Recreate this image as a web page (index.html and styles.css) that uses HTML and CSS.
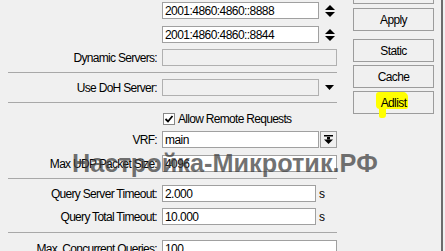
FILE: index.html
```html
<!DOCTYPE html>
<html lang="ru">
<head>
    <meta charset="UTF-8">
    <meta name="viewport" content="width=device-width, initial-scale=1.0">
    <title>DNS Settings</title>
    <link rel="stylesheet" href="styles.css">
</head>
<body>
    <div class="window">
        <div class="form">
            <div class="row row-first">
                <span class="label"></span>
                <input class="field field-short" type="text" value="2001:4860:4860::8888" readonly>
                <svg class="spin" width="10" height="12" viewBox="0 0 10 12"><polygon points="0,5 5,0 10,5"/><polygon points="0,7 10,7 5,12"/></svg>
            </div>
            <div class="row row-gap7">
                <span class="label"></span>
                <input class="field field-short" type="text" value="2001:4860:4860::8844" readonly>
                <svg class="spin" width="10" height="12" viewBox="0 0 10 12"><polygon points="0,5 5,0 10,5"/><polygon points="0,7 10,7 5,12"/></svg>
            </div>
            <div class="row row-gap6">
                <span class="label">Dynamic Servers:</span>
                <input class="field field-full disabled" type="text" readonly>
            </div>
            <div class="sep"></div>
            <div class="row">
                <span class="label">Use DoH Server:</span>
                <input class="field field-short disabled" type="text" readonly>
                <svg class="drop" width="9" height="5" viewBox="0 0 9 5"><polygon points="0,0 9,0 4.5,5"/></svg>
            </div>
            <div class="sep"></div>
            <div class="row row-check">
                <span class="label"></span>
                <span class="checkbox">
                    <svg width="10" height="10" viewBox="0 0 10 10"><path d="M1.5 5 L4 7.5 L8.5 2" fill="none" stroke="#000" stroke-width="1.8"/></svg>
                </span>
                <span class="check-text">Allow Remote Requests</span>
            </div>
            <div class="row row-gap5">
                <span class="label">VRF:</span>
                <input class="field field-short" type="text" value="main" readonly>
                <span class="pick">
                    <svg width="9" height="9" viewBox="0 0 9 9"><rect x="0" y="0" width="9" height="1.5"/><rect x="3" y="2" width="3" height="2.5"/><polygon points="0,4.5 9,4.5 4.5,9"/></svg>
                </span>
            </div>
            <div class="row row-gap7">
                <span class="label">Max UDP Packet Size:</span>
                <input class="field field-full" type="text" value="4096" readonly>
            </div>
            <div class="sep"></div>
            <div class="row">
                <span class="label">Query Server Timeout:</span>
                <input class="field field-time" type="text" value="2.000" readonly>
                <span class="unit">s</span>
            </div>
            <div class="row row-gap6">
                <span class="label">Query Total Timeout:</span>
                <input class="field field-time" type="text" value="10.000" readonly>
                <span class="unit">s</span>
            </div>
            <div class="sep sep-low"></div>
            <div class="row">
                <span class="label">Max. Concurrent Queries:</span>
                <input class="field field-full" type="text" value="100" readonly>
            </div>
        </div>

        <div class="side">
            <button class="btn btn-cut"></button>
            <button class="btn btn-apply">Apply</button>
            <button class="btn btn-static">Static</button>
            <button class="btn">Cache</button>
            <button class="btn btn-adlist"><span class="marker"></span><span class="btn-text">Adlist</span></button>
        </div>
        <div class="edge"></div>

        <div class="watermark">Настройка-Микротик.РФ</div>
    </div>
</body>
</html>
```

FILE: styles.css
```css
body {
    margin: 0;
    background-color: #f0f0f0;
    font-family: "Liberation Sans", Arial, sans-serif;
    font-size: 12px;
    letter-spacing: -0.7px;
    color: #000;
    overflow: hidden;
}
.window {
    position: relative;
    display: flex;
    width: 445px;
    height: 251px;
    overflow: hidden;
}
.form {
    width: 353px;
    padding-top: 2px;
    box-sizing: border-box;
}
.row {
    display: flex;
    align-items: center;
    height: 17px;
}
.row-gap5 {
    margin-top: 5px;
}
.row-gap6 {
    margin-top: 6px;
}
.row-gap7 {
    margin-top: 7px;
}
.row-check {
    height: 14px;
    margin-top: 9px;
}
.label {
    width: 157px;
    margin-right: 5px;
    text-align: right;
    white-space: nowrap;
    flex-shrink: 0;
}
.field {
    height: 17px;
    box-sizing: border-box;
    border: 1px solid #a0a0a0;
    background: white;
    padding: 0 2px;
    margin: 0;
    font-family: inherit;
    font-size: 12px;
    letter-spacing: -0.55px;
    color: #000;
    outline: none;
}
.field-full {
    width: 175px;
}
.field-short {
    width: 157px;
}
.field-time {
    width: 154px;
}
.disabled {
    background: #f0f0f0;
    border-color: #b0b0b0;
}
.spin, .drop {
    margin-left: 6px;
    fill: #000;
}
.sep {
    height: 1px;
    background: #a8a8a8;
    margin: 6px 16px 6px 8px;
}
.sep-low {
    margin-top: 7px;
    margin-bottom: 7px;
}
.checkbox {
    width: 12px;
    height: 12px;
    box-sizing: border-box;
    border: 1px solid #888;
    background: white;
    margin-left: 1px;
    display: flex;
    align-items: center;
    justify-content: center;
}
.check-text {
    margin-left: 3px;
}
.pick {
    width: 17px;
    height: 17px;
    box-sizing: border-box;
    border: 1px solid #a0a0a0;
    background: #f0f0f0;
    margin-left: 1px;
    display: flex;
    align-items: center;
    justify-content: center;
}
.pick svg {
    fill: #000;
}
.unit {
    margin-left: 3px;
}
.side {
    width: 88px;
    display: flex;
    flex-direction: column;
}
.btn {
    position: relative;
    width: 81px;
    height: 23px;
    margin-top: 3px;
    padding: 0;
    border: 1px solid #9c9c9c;
    background: #f0f0f0;
    font-family: inherit;
    font-size: 12px;
    letter-spacing: -0.6px;
    color: #000;
}
.btn-cut {
    margin-top: -19px;
}
.btn-apply {
    margin-top: 4px;
}
.btn-static {
    margin-top: 8px;
}
.btn-text {
    position: relative;
}
.marker {
    position: absolute;
    left: 22px;
    top: 0;
    width: 32px;
    height: 17px;
    background: #ffff00;
    border-radius: 3px 5px 2px 4px;
}
.marker::after {
    content: "";
    position: absolute;
    left: 3px;
    top: 16px;
    width: 7px;
    height: 10px;
    background: #ffff00;
    border-radius: 0 0 3px 2px;
}
.edge {
    width: 2px;
    background: #6c6c6c;
}
.watermark {
    position: absolute;
    left: 72px;
    top: 151px;
    font-family: "Liberation Sans", Arial, sans-serif;
    font-weight: bold;
    font-size: 25.3px;
    line-height: 25px;
    letter-spacing: 0;
    color: rgba(60, 60, 60, 0.72);
    white-space: nowrap;
}
```
